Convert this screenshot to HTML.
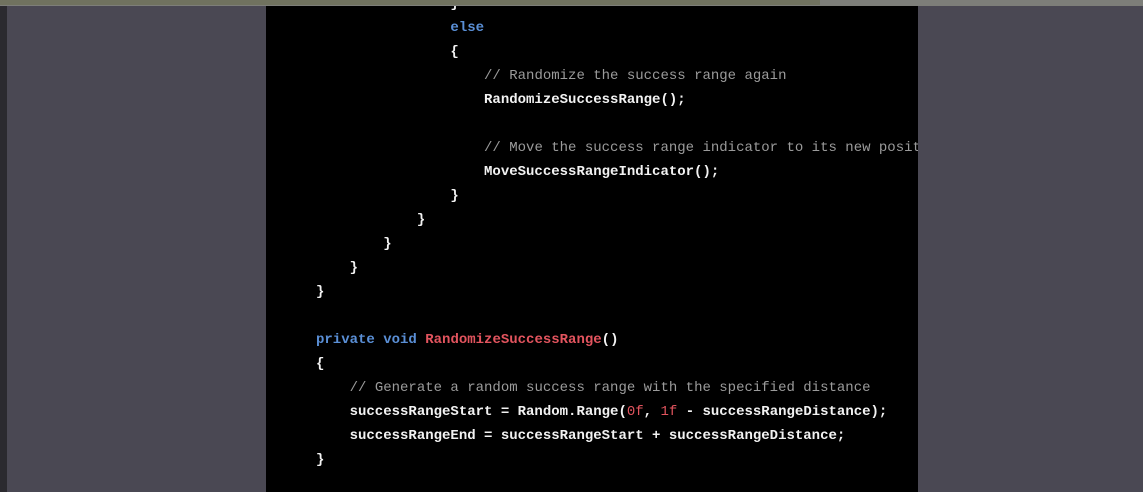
<!DOCTYPE html><html><head><style>
body{margin:0;width:1143px;height:492px;overflow:hidden;background:#4a4853;position:relative;font-family:"Liberation Mono",monospace}
.l{position:absolute;left:0;top:0;width:7px;height:492px;background:#2b2a2f}
.top{position:absolute;left:0;top:0;width:1143px;height:6px;background:#7d7e79}
.top2{position:absolute;left:0;top:0;width:820px;height:5px;background:#70725f}
.code{position:absolute;left:266px;top:6px;width:652px;height:486px;background:#000;overflow:hidden}
pre{position:absolute;left:50px;top:-14px;margin:0;font:bold 14px/24px "Liberation Mono",monospace;color:#f2f2f2;letter-spacing:0}
.k{color:#5a8fd6}.f{color:#e2545e}.c{color:#9b9b9b;font-weight:normal}.n{color:#e2545e;font-weight:normal}
</style></head><body>
<div class="l"></div>
<div class="code"><pre>                }
                <span class="k">else</span>
                {
                    <span class="c">// Randomize the success range again</span>
                    RandomizeSuccessRange();

                    <span class="c">// Move the success range indicator to its new position</span>
                    MoveSuccessRangeIndicator();
                }
            }
        }
    }
}

<span class="k">private</span> <span class="k">void</span> <span class="f">RandomizeSuccessRange</span>()
{
    <span class="c">// Generate a random success range with the specified distance</span>
    successRangeStart = Random.Range(<span class="n">0f</span>, <span class="n">1f</span> - successRangeDistance);
    successRangeEnd = successRangeStart + successRangeDistance;
}</pre></div>
<div class="top"></div><div class="top2"></div>
</body></html>
